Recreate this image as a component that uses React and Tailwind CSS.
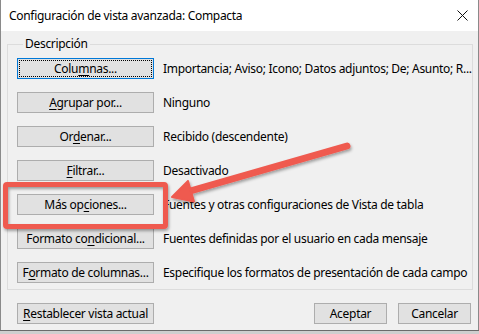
import React from "react";

const font = { fontFamily: '"Noto Sans", "Open Sans", sans-serif' };

const rows = [
  { pre: "Colu", key: "m", post: "nas...", text: "Importancia; Aviso; Icono; Datos adjuntos; De; Asunto; R...", focused: true },
  { pre: "", key: "A", post: "grupar por...", text: "Ninguno" },
  { pre: "Or", key: "d", post: "enar...", text: "Recibido (descendente)" },
  { pre: "", key: "F", post: "iltrar...", text: "Desactivado" },
  { pre: "Más op", key: "c", post: "iones...", text: "Fuentes y otras configuraciones de Vista de tabla" },
  { pre: "Formato co", key: "n", post: "dicional...", text: "Fuentes definidas por el usuario en cada mensaje" },
  { pre: "F", key: "o", post: "rmato de columnas...", text: "Especifique los formatos de presentación de cada campo" },
];

const Button = ({ children, focused = false, className = "" }) => (
  <button
    className={`h-[21px] flex items-center justify-center bg-[#e1e1e1] text-[12px] tracking-[-0.3px] text-black leading-none ${
      focused ? "border border-[#0078d7] p-[1px]" : "border border-[#adadad]"
    } ${className}`}
  >
    {focused ? (
      <span className="w-full h-full flex items-center justify-center outline-1 outline-dotted outline-black -outline-offset-1">
        {children}
      </span>
    ) : (
      children
    )}
  </button>
);

const Mnemonic = ({ pre, k, post }) => (
  <span>
    {pre}
    <span className="underline underline-offset-2">{k}</span>
    {post}
  </span>
);

export default function App() {
  return (
    <div className="relative w-[479px] h-[334px] overflow-hidden bg-[#f0f0f0] text-[#000] tracking-[-0.3px]" style={font}>
      <div className="flex flex-col h-[330px] border-l border-r border-[#8a8a8a]">
        {/* title bar */}
        <div className="h-[31px] bg-white flex items-center justify-between pl-[8px] pr-[10px]">
          <span className="text-[12px]">Configuración de vista avanzada: Compacta</span>
          <svg width="11" height="11" viewBox="0 0 11 11">
            <path d="M0.5 0.5 L10.5 10.5 M10.5 0.5 L0.5 10.5" stroke="#111" strokeWidth="1" />
          </svg>
        </div>

        {/* body */}
        <div className="flex-1 px-[6px] pt-[5px]">
          <fieldset className="border border-[#dcdcdc] h-[254px] pl-[9px] pt-[6px]">
            <legend className="text-[12px] ml-[6px] px-[2px] leading-[16px]">Descripción</legend>
            <div className="flex flex-col gap-[13px]">
              {rows.map((r, i) => (
                <div key={i} className="flex items-center">
                  <Button focused={r.focused} className="w-[137px] shrink-0">
                    <Mnemonic pre={r.pre} k={r.key} post={r.post} />
                  </Button>
                  <span className="ml-[9px] text-[12px] whitespace-nowrap">{r.text}</span>
                </div>
              ))}
            </div>
          </fieldset>

          <div className="flex items-center mt-[13px] pl-[10px] pr-[1px]">
            <Button className="w-[137px]">
              <Mnemonic pre="" k="R" post="establecer vista actual" />
            </Button>
            <div className="flex-1" />
            <Button className="w-[73px]">Aceptar</Button>
            <Button className="w-[73px] ml-[11px]">Cancelar</Button>
          </div>
        </div>
      </div>
      <div className="h-[4px] bg-[#cfcfcf] border-t border-[#6b6b6b]" />

      {/* annotation overlay */}
      <svg className="absolute inset-0 pointer-events-none" width="479" height="334" viewBox="0 0 479 334">
        <defs>
          <filter id="sh" x="-10%" y="-10%" width="120%" height="130%">
            <feDropShadow dx="1" dy="2" stdDeviation="1.5" floodColor="#000" floodOpacity="0.35" />
          </filter>
        </defs>
        <g filter="url(#sh)">
          <rect x="5.5" y="184.5" width="160" height="42" rx="1.5" fill="none" stroke="#ef5a50" strokeWidth="5" />
          <line x1="347" y1="146" x2="185" y2="192.5" stroke="#ef5a50" strokeWidth="7" strokeLinecap="round" />
          <polygon points="172,197 194,201.5 188,181" fill="#ef5a50" stroke="#ef5a50" strokeWidth="2" strokeLinejoin="round" />
        </g>
      </svg>
    </div>
  );
}
